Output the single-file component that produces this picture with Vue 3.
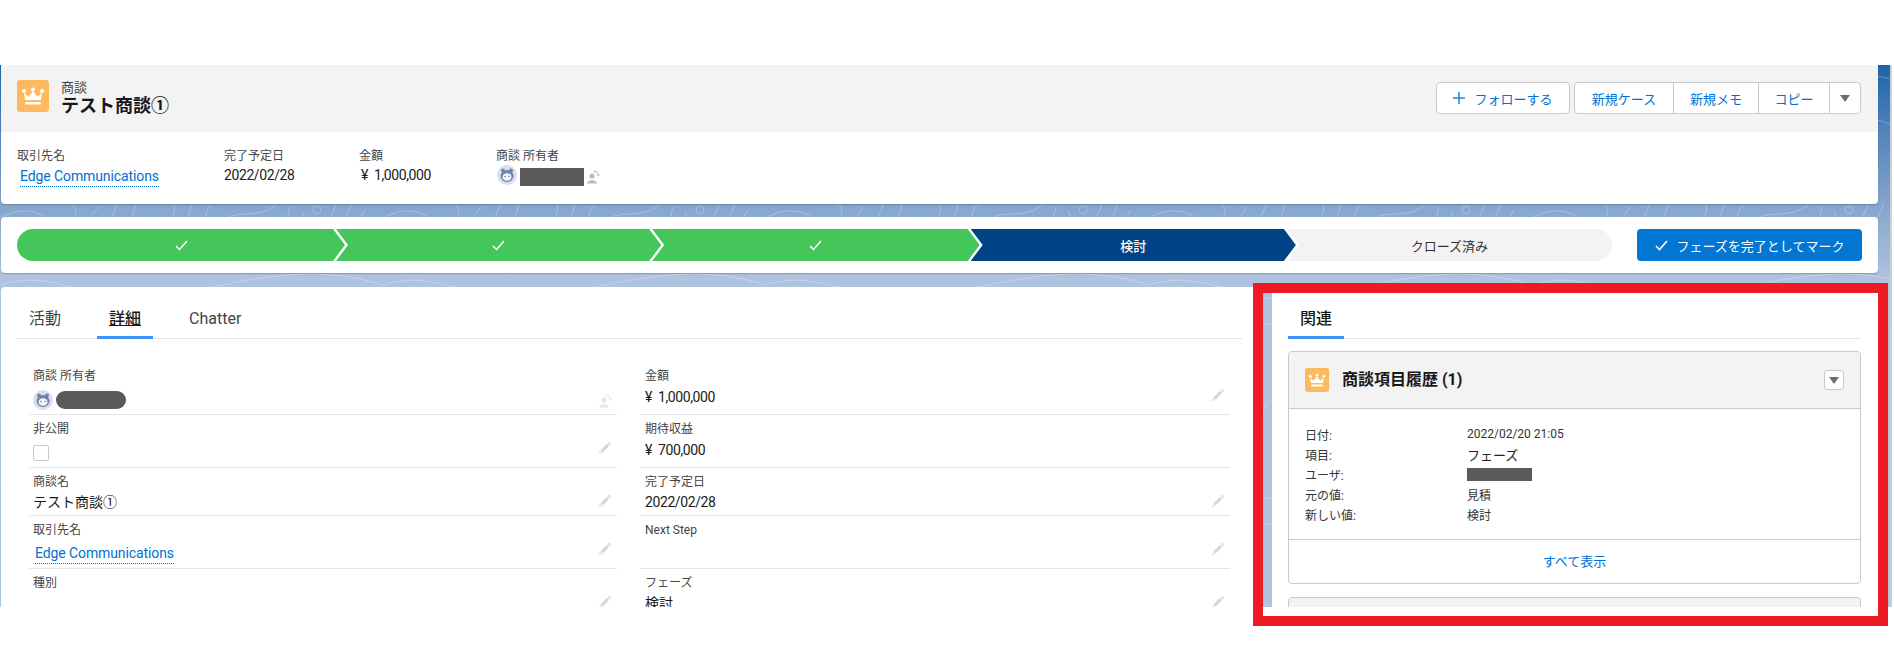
<script setup>
const leftRows = [
  { label: '商談 所有者', kind: 'owner', size: 'tall' },
  { label: '非公開', kind: 'check', size: 'tall', pencil: true },
  { label: '商談名', value: 'テスト商談①', kind: 'text', size: 'short', gap: 'near', pencil: true },
  { label: '取引先名', value: 'Edge Communications', kind: 'link', size: 'tall', pencil: true },
  { label: '種別', value: '', kind: 'text', size: 'tall', pencil: true }
]
const rightRows = [
  { label: '金額', value: '¥ 1,000,000', kind: 'text', size: 'tall', gap: 'mid', pencil: true, num: true },
  { label: '期待収益', value: '¥ 700,000', kind: 'text', size: 'tall', gap: 'mid', num: true },
  { label: '完了予定日', value: '2022/02/28', kind: 'text', size: 'short', gap: 'near', pencil: true, num: true },
  { label: 'Next Step', value: '', kind: 'text', size: 'tall', pencil: true },
  { label: 'フェーズ', value: '検討', kind: 'text', size: 'tall', gap: 'near', pencil: true }
]
const history = [
  { k: '日付:', v: '2022/02/20 21:05' },
  { k: '項目:', v: 'フェーズ', big: true },
  { k: 'ユーザ:', redacted: true },
  { k: '元の値:', v: '見積' },
  { k: '新しい値:', v: '検討' }
]
const steps = [
  { state: 'done' }, { state: 'done' }, { state: 'done' },
  { state: 'current', text: '検討' }, { state: 'todo', text: 'クローズ済み' }
]
</script>

<template>
  <div class="page">
    <div class="stage">
      <svg class="contours" width="1890" height="542" aria-hidden="true">
        <defs>
          <pattern id="contour" patternUnits="userSpaceOnUse" width="383" height="200" x="0" y="0">
            <g fill="none" stroke="#fff" stroke-opacity=".26" stroke-width="1">
              <circle cx="317" cy="145" r="4" />
              <path d="M330 152c3-4 5-9 6-14M345 153c3-4 5-9 7-15M360 153l5-8" />
              <path d="M0 153c14-8 30-10 44-2M72 139c5 4 5 10 1 14M92 150l6-8M112 152l6-14M132 153l4-14M172 152c3-4 3-9 2-13M188 153l4-14M206 152c0-5 2-10 6-12" />
              <path d="M226 153c10-6 30-2 42-8 6-3 8-5 8-7M288 153c0-4 1-8 2-11M302 146c1 3 2 5 3 7" />
              <path d="M0 20c60-20 100 30 180 10S320 0 383 20M40 60c50-20 120 20 180 0s100-20 163 10" />
            </g>
          </pattern>
        </defs>
        <rect width="1890" height="542" fill="url(#contour)" />
      </svg>

      <section class="card highlights">
        <header class="head">
          <div class="identity">
            <svg class="crown" width="32" height="32" viewBox="0 0 32 32">
              <rect width="32" height="32" rx="3" fill="#fdb95f" />
              <g fill="#fff">
                <circle cx="7" cy="11" r="2" /><circle cx="16" cy="9.5" r="2" /><circle cx="25" cy="11" r="2" />
                <path d="M7 12.500l4.400 4.600L16 11l4.600 6.100L25 12.500 23.800 20H8.200z" />
                <rect x="8.200" y="22" width="15.600" height="2.600" rx=".6" />
              </g>
            </svg>
            <div class="titles">
              <div class="entity">商談</div>
              <div class="name">テスト商談①</div>
            </div>
          </div>
          <div class="actions">
            <button class="btn follow">
              <svg width="12" height="12" viewBox="0 0 12 12"><path d="M6 0v12M0 6h12" stroke="#1b86d9" stroke-width="1.500" /></svg>
              フォローする
            </button>
            <div class="group">
              <button class="btn g1">新規ケース</button>
              <button class="btn g2">新規メモ</button>
              <button class="btn g3">コピー</button>
              <button class="btn g4"><span class="tri"></span></button>
            </div>
          </div>
        </header>
        <div class="facts">
          <div>
            <div class="label">取引先名</div>
            <a class="link fact-link">Edge Communications</a>
          </div>
          <div>
            <div class="label">完了予定日</div>
            <div class="fact-value num">2022/02/28</div>
          </div>
          <div>
            <div class="label">金額</div>
            <div class="fact-value num yen">¥ 1,000,000</div>
          </div>
          <div>
            <div class="label">商談 所有者</div>
            <div class="owner">
              <svg class="avatar" width="20" height="20" viewBox="0 0 20 20">
                <circle cx="10" cy="10" r="10" fill="#d8e0ec" />
                <circle cx="6" cy="5.500" r="2" fill="#6f84ab" /><circle cx="14" cy="5.500" r="2" fill="#6f84ab" />
                <ellipse cx="10" cy="11" rx="6.500" ry="6" fill="#6f84ab" />
                <ellipse cx="10" cy="12" rx="4.500" ry="3.800" fill="#f3f6fb" />
                <circle cx="8" cy="11.500" r=".8" fill="#6f84ab" /><circle cx="12" cy="11.500" r=".8" fill="#6f84ab" />
              </svg>
              <span class="redact"></span>
              <svg class="swap" width="13" height="14" viewBox="0 0 13 14">
                <g fill="#bdbdbd">
                  <circle cx="5" cy="6" r="2.600" />
                  <path d="M0 13.500c0-2 1.500-2.500 3.500-3.300h3c2 .8 3.500 1.300 3.500 3.300z" />
                </g>
                <path d="M6.500 1.500c2.500-.5 4.500 1 4.800 3.500" fill="none" stroke="#bdbdbd" stroke-width="1.100" />
                <path d="M9.500 4.500h3.500l-1.700 2z" fill="#bdbdbd" />
              </svg>
            </div>
          </div>
        </div>
      </section>

      <section class="card path">
        <div class="steps">
          <div v-for="(s, i) in steps" :key="i" class="step" :class="s.state">
            <svg v-if="s.state === 'done'" width="13" height="11" viewBox="0 0 13 11">
              <path d="M1 6l3.500 3.500L12 1" fill="none" stroke="#fff" stroke-width="1.500" />
            </svg>
            <span v-else>{{ s.text }}</span>
          </div>
        </div>
        <button class="mark">
          <svg width="13" height="11" viewBox="0 0 13 11">
            <path d="M1 6l3.500 3.500L12 1" fill="none" stroke="#fff" stroke-width="1.700" />
          </svg>
          フェーズを完了としてマーク
        </button>
      </section>

      <div class="columns">
        <section class="card details">
          <nav class="tabs">
            <span class="tab">活動</span>
            <span class="tab active focus">詳細</span>
            <span class="tab">Chatter</span>
          </nav>
          <div class="grid">
            <div class="col">
              <div v-for="r in leftRows" :key="r.label" class="row" :class="r.size">
                <div class="cell">
                  <div class="label">{{ r.label }}</div>
                  <div v-if="r.kind === 'owner'" class="owner-row">
                    <svg width="20" height="20" viewBox="0 0 20 20">
                      <circle cx="10" cy="10" r="10" fill="#d8e0ec" />
                      <circle cx="6" cy="5.500" r="2" fill="#6f84ab" /><circle cx="14" cy="5.500" r="2" fill="#6f84ab" />
                      <ellipse cx="10" cy="11" rx="6.500" ry="6" fill="#6f84ab" />
                      <ellipse cx="10" cy="12" rx="4.500" ry="3.800" fill="#f3f6fb" />
                      <circle cx="8" cy="11.500" r=".8" fill="#6f84ab" /><circle cx="12" cy="11.500" r=".8" fill="#6f84ab" />
                    </svg>
                    <span class="pill"></span>
                  </div>
                  <div v-else-if="r.kind === 'check'" class="checkbox"></div>
                  <a v-else-if="r.kind === 'link'" class="link row-link">{{ r.value }}</a>
                  <div v-else class="value" :class="[r.gap, { num: r.num }]">{{ r.value }}</div>
                </div>
                <svg v-if="r.pencil" class="pencil" width="14" height="14" viewBox="0 0 14 14">
                  <path d="M11 .8l2.200 2.200-1.200 1.200-2.200-2.200zM9 2.800L11.200 5l-6.700 6.700-2.200-2.200zM1.800 10.300L3.700 12.200 1 13z" fill="#d6d6d6" />
                </svg>
                <svg v-else-if="r.kind === 'owner'" class="pencil swap-row" width="13" height="14" viewBox="0 0 13 14">
                  <g fill="#e6e6e6">
                    <circle cx="5" cy="6" r="2.600" />
                    <path d="M0 13.500c0-2 1.500-2.500 3.500-3.300h3c2 .8 3.500 1.300 3.500 3.300z" />
                  </g>
                  <path d="M6.500 1.500c2.500-.5 4.500 1 4.800 3.500" fill="none" stroke="#e6e6e6" stroke-width="1.100" />
                  <path d="M9.500 4.500h3.500l-1.700 2z" fill="#e6e6e6" />
                </svg>
              </div>
            </div>
            <div class="col">
              <div v-for="r in rightRows" :key="r.label" class="row" :class="r.size">
                <div class="cell">
                  <div class="label">{{ r.label }}</div>
                  <div class="value" :class="[r.gap, { num: r.num }]">{{ r.value }}</div>
                </div>
                <svg v-if="r.pencil" class="pencil" width="14" height="14" viewBox="0 0 14 14">
                  <path d="M11 .8l2.200 2.200-1.200 1.200-2.200-2.200zM9 2.800L11.200 5l-6.700 6.700-2.200-2.200zM1.800 10.300L3.700 12.200 1 13z" fill="#d6d6d6" />
                </svg>
              </div>
            </div>
          </div>
        </section>

        <section class="card related">
          <nav class="tabs">
            <span class="tab active strong">関連</span>
          </nav>
          <article class="list">
            <header class="list-head">
              <svg width="24" height="24" viewBox="0 0 32 32">
                <rect width="32" height="32" rx="3" fill="#fdb95f" />
                <g fill="#fff">
                  <circle cx="7" cy="11" r="2" /><circle cx="16" cy="9.500" r="2" /><circle cx="25" cy="11" r="2" />
                  <path d="M7 12.500l4.400 4.600L16 11l4.600 6.100L25 12.500 23.800 20H8.200z" />
                  <rect x="8.200" y="22" width="15.600" height="2.600" rx=".6" />
                </g>
              </svg>
              <h2 class="list-title">商談項目履歴 (1)</h2>
              <button class="mini"><span class="tri"></span></button>
            </header>
            <div class="list-body">
              <div v-for="h in history" :key="h.k" class="pair">
                <span class="k">{{ h.k }}</span>
                <span v-if="h.redacted" class="redact-sm"></span>
                <span v-else class="v" :class="{ big: h.big }">{{ h.v }}</span>
              </div>
            </div>
            <footer class="list-foot">すべて表示</footer>
          </article>
          <div class="next-card"></div>
        </section>
      </div>
    </div>
    <div class="highlight-box"></div>
  </div>
</template>

<style>
html, body { margin: 0; background: #fff; }
</style>

<style scoped>
.page {
  position: relative;
  width: 1894px;
  height: 672px;
  overflow: hidden;
  padding-top: 65px;
  box-sizing: border-box;
  background: #fff;
  font-family: Roboto, "Noto Sans CJK JP", sans-serif;
  color: #1a1a19;
}
.stage {
  position: relative;
  isolation: isolate;
  width: 1892px;
  height: 542px;
  box-sizing: border-box;
  border-right: 2px solid #cfcfcf;
  overflow: hidden;
  background: linear-gradient(180deg, #1d64a8 0, #5b8abf 80px, #8aa9d0 150px, #afc3de 215px, #b0c4df 100%);
}
.contours { position: absolute; left: 0; top: 0; z-index: -1; }
.card {
  background: #fff;
  margin: 0 12px 0 1px;
  border-radius: 0 0 4px 4px;
  box-shadow: 0 1px 1px rgba(60, 60, 60, .3);
}
.head {
  height: 67px;
  box-sizing: border-box;
  padding: 15px 17px 0 16px;
  background: #f3f3f3;
  display: flex;
  justify-content: space-between;
  align-items: flex-start;
}
.identity { display: flex; gap: 12px; }
.titles { padding-top: 1px; }
.entity { font-size: 13px; line-height: 14px; color: #444; }
.name { font-size: 18px; line-height: 23px; font-weight: 700; color: #181818; margin-top: -1px; }
.actions { display: flex; gap: 4px; margin-top: 2px; }
.btn {
  height: 32px;
  box-sizing: border-box;
  padding: 0;
  border: 0;
  background: #fff;
  color: #0070d2;
  font: inherit;
  font-size: 13px;
  display: flex;
  align-items: center;
  justify-content: center;
}
.follow {
  width: 134px;
  gap: 9px;
  border: 1px solid #c9c9c9;
  border-radius: 4px;
}
.group {
  display: flex;
  width: 287px;
  box-sizing: border-box;
  border: 1px solid #c9c9c9;
  border-radius: 4px;
  background: #fff;
}
.group .btn { height: 30px; background: transparent; }
.g1 { width: 98px; }
.g2 { width: 85px; border-left: 1px solid #c9c9c9; }
.g3 { width: 71px; border-left: 1px solid #c9c9c9; }
.g4 { width: 31px; border-left: 1px solid #c9c9c9; }
.tri {
  width: 0;
  height: 0;
  border-left: 5px solid transparent;
  border-right: 5px solid transparent;
  border-top: 7px solid #706e6b;
}
.facts {
  height: 72px;
  box-sizing: border-box;
  padding: 16px 0 0 16px;
  display: grid;
  grid-template-columns: 207px 135px 137px 200px;
}
.label { font-size: 12px; line-height: 16px; color: #444; }
.link { color: #0070d2; font-size: 14px; line-height: 19px; letter-spacing: -.1px; border-bottom: 1px dotted #0070d2; display: inline-block; }
.fact-link { margin: 3px 0 0 3px; }
.fact-value { font-size: 14px; line-height: 20px; margin-top: 1px; color: #222; }
.num { letter-spacing: -.4px; word-spacing: 3px; }
.yen { padding-left: 2px; }
.owner { display: flex; align-items: flex-start; margin-top: 1px; }
.avatar { margin-left: 1px; }
.redact { width: 64px; height: 18px; margin: 3px 0 0 3px; background: #5a5a5a; }
.swap { margin: 5px 0 0 3px; }

.path {
  margin-top: 13px;
  height: 56px;
  box-sizing: border-box;
  padding: 12px 16px;
  border-radius: 4px;
  display: flex;
  gap: 25px;
}
.steps { flex: 1; display: flex; }
.step {
  flex: 1;
  height: 32px;
  margin-left: -9px;
  display: flex;
  align-items: center;
  justify-content: center;
  font-size: 13px;
  clip-path: polygon(0 0, calc(100% - 12px) 0, 100% 50%, calc(100% - 12px) 100%, 0 100%, 12px 50%);
}
.step:first-child {
  flex: 0 0 328px;
  margin-left: 0;
  border-radius: 16px 0 0 16px;
  clip-path: polygon(0 0, calc(100% - 12px) 0, 100% 50%, calc(100% - 12px) 100%, 0 100%);
}
.step:nth-child(3) { flex: 0 0 327.5px; }
.step:last-child {
  border-radius: 0 16px 16px 0;
  clip-path: polygon(0 0, 100% 0, 100% 100%, 0 100%, 12px 50%);
}
.done { background: #45c65a; }
.current { background: #014486; color: #fff; font-weight: 500; }
.todo { background: #f3f3f3; color: #333; }
.mark {
  width: 225px;
  height: 32px;
  border: 0;
  border-radius: 4px;
  padding: 0;
  background: #0176d3;
  color: #fff;
  font: inherit;
  font-size: 13px;
  display: flex;
  align-items: center;
  justify-content: center;
  gap: 9px;
}

.columns { display: flex; gap: 15px; margin-top: 14px; margin-right: 12px; }
.columns .card { margin: 0; border-radius: 4px 4px 0 0; box-shadow: none; height: 330px; }
.columns .details { margin-left: 1px; width: 1256px; padding: 0 15px 0 16px; box-sizing: border-box; }
.columns .related { width: 606px; padding: 0 17px 0 16px; box-sizing: border-box; }
.tabs { display: flex; gap: 24px; height: 52px; box-sizing: border-box; border-bottom: 1px solid #e5e5e5; }
.tab {
  height: 52px;
  box-sizing: border-box;
  padding: 20px 12px 5px;
  font-size: 16px;
  line-height: 24px;
  color: #444;
  border-bottom: 3px solid transparent;
}
.active { border-bottom-color: #3d94f6; color: #181818; }
.focus { font-weight: 500; text-decoration: underline; }
.strong { font-weight: 500; }
.grid {
  display: grid;
  grid-template-columns: 588px 589px;
  gap: 24px;
  padding: 23px 0 0 12px;
}
.row {
  display: flex;
  justify-content: space-between;
  padding: 6px 0 0 4px;
  box-sizing: border-box;
  border-bottom: 1px solid #e5e5e5;
}
.tall { height: 53px; }
.short { height: 48px; }
.value { font-size: 14px; line-height: 20px; margin-top: 4px; color: #1a1a19; min-height: 20px; }
.value.near { margin-top: 2px; }
.value.mid { margin-top: 3px; }
.owner-row { display: flex; align-items: center; gap: 3px; margin-top: 6px; }
.pill {
  display: block;
  width: 70px;
  height: 18px;
  border-radius: 9px;
  background: #5a5a5a;
}
.checkbox {
  width: 16px;
  height: 16px;
  box-sizing: border-box;
  border: 1px solid #c9c9c9;
  border-radius: 2px;
  margin-top: 8px;
}
.row-link { margin: 6px 0 0 2px; }
.pencil { margin: 20px 5px 0 0; flex: none; }
.swap-row { margin-top: 26px; }

.list {
  margin-top: 12px;
  height: 233px;
  box-sizing: border-box;
  border: 1px solid #c9c9c9;
  border-radius: 4px;
  overflow: hidden;
}
.list-head {
  height: 57px;
  box-sizing: border-box;
  padding: 0 16px;
  background: #f3f3f3;
  border-bottom: 1px solid #c9c9c9;
  display: flex;
  align-items: center;
  gap: 13px;
}
.list-title { flex: 1; margin: 0; font-size: 16px; line-height: 20px; font-weight: 700; color: #181818; }
.mini {
  width: 20px;
  height: 20px;
  padding: 0;
  background: #fff;
  border: 1px solid #c9c9c9;
  border-radius: 3px;
  display: flex;
  align-items: center;
  justify-content: center;
}
.list-body {
  height: 131px;
  box-sizing: border-box;
  padding: 15px 16px 0;
  border-bottom: 1px solid #c9c9c9;
}
.pair { display: flex; height: 20.2px; align-items: center; font-size: 12px; color: #333; }
.k { width: 162px; flex: none; }
.big { font-size: 13px; color: #222; }
.redact-sm { width: 65px; height: 13px; background: #5a5a5a; }
.list-foot {
  height: 41px;
  display: flex;
  align-items: center;
  justify-content: center;
  font-size: 13px;
  color: #0070d2;
}
.next-card {
  margin-top: 13px;
  height: 30px;
  background: #f3f3f3;
  border: 1px solid #c9c9c9;
  border-radius: 4px 4px 0 0;
}
.highlight-box {
  position: absolute;
  left: 1253px;
  top: 283px;
  width: 635px;
  height: 343px;
  box-sizing: border-box;
  border: 10px solid #ed1c24;
}
</style>
